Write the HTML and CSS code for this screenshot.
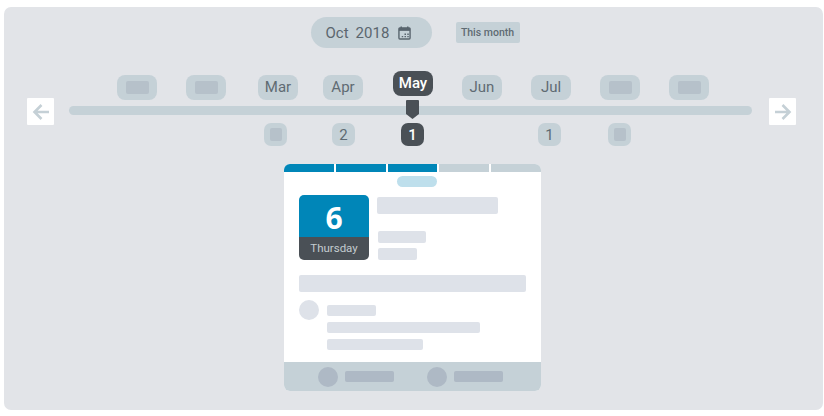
FILE: index.html
```html
<!DOCTYPE html>
<html lang="en">
<head>
    <meta name="viewport" content="width=device-width, initial-scale=1.0">
    <title>Timeline</title>
    <link rel="stylesheet" href="styles.css">
</head>
<body>
    <div class="panel">
        <!-- Month picker -->
        <div class="picker">
            <div class="date-pill">
                <span class="date-text">Oct</span>
                <span class="date-text">2018</span>
                <svg class="cal-icon" width="13" height="14" viewBox="0 0 14 15">
                    <path d="M3.500 0.500v2.500M10.500 0.500v2.500" stroke="#59656e" stroke-width="1.600" fill="none"/>
                    <rect x="1" y="2" width="12" height="12" rx="1" stroke="#59656e" stroke-width="1.500" fill="none"/>
                    <rect x="1" y="2" width="12" height="3.200" fill="#59656e"/>
                    <path d="M7 8h1.600v1.600H7zM10 8h1.600v1.600H10zM4 10.600h1.600v1.600H4zM7 10.600h1.600v1.600H7zM10 10.600h1.600v1.600H10z" fill="#59656e"/>
                </svg>
            </div>
            <div class="this-month">This month</div>
        </div>

        <!-- Timeline -->
        <div class="timeline">
            <div class="months">
                <div class="chip"><span class="chip-empty"></span></div>
                <div class="chip"><span class="chip-empty"></span></div>
                <div class="chip chip-mar">Mar</div>
                <div class="chip chip-apr">Apr</div>
                <div class="chip chip-active">May</div>
                <div class="chip">Jun</div>
                <div class="chip">Jul</div>
                <div class="chip"><span class="chip-empty"></span></div>
                <div class="chip"><span class="chip-empty"></span></div>
            </div>
            <div class="track-row">
                <button class="arrow">
                    <svg width="18" height="18" viewBox="0 0 18 18"><path d="M17 9H3M9.500 2L2.500 9l7 7" stroke="#c5d0d6" stroke-width="2.600" fill="none"/></svg>
                </button>
                <div class="track"></div>
                <button class="arrow">
                    <svg width="18" height="18" viewBox="0 0 18 18"><path d="M1 9h14M8.500 2l7 7-7 7" stroke="#c5d0d6" stroke-width="2.600" fill="none"/></svg>
                </button>
                <svg class="marker" width="13" height="19" viewBox="0 0 13 19"><path d="M1 0h11a1 1 0 0 1 1 1v13l-6.500 5L0 14V1a1 1 0 0 1 1-1z" fill="#4a5056"/></svg>
            </div>
            <div class="counts">
                <div class="count"><span class="count-empty"></span></div>
                <div class="count">2</div>
                <div class="count count-active">1</div>
                <div class="count count-jul">1</div>
                <div class="count count-last"><span class="count-empty"></span></div>
            </div>
        </div>

        <!-- Event card -->
        <div class="card">
            <div class="tabs">
                <span class="tab tab-on"></span>
                <span class="tab tab-on"></span>
                <span class="tab tab-on"></span>
                <span class="tab"></span>
                <span class="tab"></span>
            </div>
            <div class="card-pill"></div>
            <div class="card-body">
                <div class="card-head">
                    <div class="day">
                        <div class="day-num">6</div>
                        <div class="day-name">Thursday</div>
                    </div>
                    <div class="head-lines">
                        <div class="bar bar-title"></div>
                        <div class="bar bar-a"></div>
                        <div class="bar bar-b"></div>
                    </div>
                </div>
                <div class="bar bar-wide"></div>
                <div class="person">
                    <div class="dot"></div>
                    <div class="person-lines">
                        <div class="line line-a"></div>
                        <div class="line line-b"></div>
                        <div class="line line-c"></div>
                    </div>
                </div>
            </div>
            <div class="card-foot">
                <div class="foot-item"><span class="foot-dot"></span><span class="foot-bar"></span></div>
                <div class="foot-item"><span class="foot-dot"></span><span class="foot-bar"></span></div>
            </div>
        </div>
    </div>
</body>
</html>
```

FILE: styles.css
```css
body {
    background-color: white;
    font-family: Roboto, sans-serif;
    margin: 0;
    padding: 7px 1px 6px 4px;
}
.panel {
    height: 403px;
    background-color: #e2e4e8;
    border-radius: 7px;
    display: flex;
    flex-direction: column;
    align-items: center;
}
/* Month picker */
.picker {
    display: flex;
    align-items: center;
    margin-top: 10px;
    margin-left: 3px;
    width: 209px;
    gap: 24px;
}
.date-pill {
    width: 121px;
    height: 31px;
    flex: none;
    box-sizing: border-box;
    padding-left: 15px;
    border-radius: 16px;
    background-color: #c5d1d7;
    display: flex;
    align-items: center;
    gap: 7px;
}
.date-text {
    font-size: 15px;
    color: #5b666e;
}
.cal-icon {
    margin-left: 2px;
}
.this-month {
    width: 64px;
    height: 21px;
    flex: none;
    border-radius: 2px;
    background-color: #c5d1d7;
    color: #5f6b73;
    font-size: 10.500px;
    font-weight: 500;
    line-height: 21px;
    text-align: center;
}
/* Timeline */
.timeline {
    width: 769px;
    margin-top: 21px;
    margin-left: -4px;
}
.months {
    display: flex;
    justify-content: flex-start;
    gap: 29px;
    height: 27px;
    margin-bottom: -2px;
    padding-left: 90px;
    padding-top: 4px;
    align-items: flex-end;
}
.chip {
    width: 40px;
    height: 25px;
    flex: none;
    border-radius: 8px;
    background-color: #c5d1d7;
    color: #5f6b73;
    font-size: 15px;
    line-height: 25px;
    text-align: center;
    display: flex;
    align-items: center;
    justify-content: center;
}
.chip-empty {
    width: 23px;
    height: 13px;
    border-radius: 2px;
    background-color: #b6c1ca;
}
.chip-mar {
    margin-left: 3px;
}
.chip-apr {
    margin-left: -4px;
}
.chip-active {
    margin-left: 1px;
    margin-bottom: 4px;
    background-color: #4a5056;
    color: white;
    font-weight: 500;
}
.track-row {
    display: flex;
    align-items: center;
    gap: 15px;
    height: 27px;
    position: relative;
}
.arrow {
    width: 27px;
    height: 27px;
    padding: 0;
    border: none;
    border-radius: 1px;
    background-color: white;
    display: flex;
    align-items: center;
    justify-content: center;
    flex: none;
}
.track {
    flex: 1;
    height: 9px;
    margin-right: 2px;
    margin-bottom: 2px;
    border-radius: 5px;
    background-color: #c5d1d7;
}
.marker {
    position: absolute;
    left: 379px;
    top: 2px;
}
.counts {
    display: flex;
    gap: 45px;
    padding-left: 237px;
    margin-top: -2px;
}
.count {
    width: 23px;
    height: 23px;
    flex: none;
    border-radius: 7px;
    background-color: #c5d1d7;
    color: #5f6b73;
    font-size: 15px;
    display: flex;
    align-items: center;
    justify-content: center;
}
.count-empty {
    width: 12px;
    height: 13px;
    border-radius: 2px;
    background-color: #b6c1ca;
}
.count-active {
    margin-left: 1px;
    background-color: #4a5056;
    color: white;
    font-weight: 500;
}
.count-jul {
    margin-left: 69px;
}
.count-last {
    margin-left: 2px;
}
/* Event card */
.card {
    width: 257px;
    height: 227px;
    margin-top: 18px;
    margin-left: -2px;
    border-radius: 6px;
    background-color: white;
    overflow: hidden;
    display: flex;
    flex-direction: column;
    flex: none;
}
.tabs {
    display: flex;
    gap: 2px;
    height: 8px;
    flex: none;
}
.tab {
    flex: 1;
    background-color: #c5d1d7;
}
.tab-on {
    background-color: #0086b8;
}
.card-pill {
    width: 40px;
    height: 11px;
    flex: none;
    margin: 4px 0 0 113px;
    border-radius: 6px;
    background-color: #bedfec;
}
.card-body {
    flex: 1;
    padding: 8px 15px 0;
}
.card-head {
    display: flex;
    gap: 8px;
}
.day {
    width: 70px;
    height: 65px;
    border-radius: 5px;
    overflow: hidden;
    flex: none;
}
.day-num {
    height: 42px;
    background-color: #0086b8;
    color: white;
    font-family: "Open Sans", sans-serif;
    font-size: 30px;
    font-weight: 700;
    line-height: 46px;
    text-align: center;
}
.day-name {
    height: 23px;
    background-color: #4a5056;
    color: #c4ccd0;
    font-size: 11.500px;
    line-height: 22px;
    text-align: center;
}
.head-lines {
    padding-top: 2px;
}
.bar {
    border-radius: 2px;
    background-color: #dee2e9;
}
.bar-title {
    width: 121px;
    height: 17px;
}
.bar-a {
    width: 48px;
    height: 12px;
    margin: 17px 0 0 1px;
}
.bar-b {
    width: 39px;
    height: 12px;
    margin: 5px 0 0 1px;
}
.bar-wide {
    width: 227px;
    height: 17px;
    margin-top: 15px;
}
.person {
    display: flex;
    gap: 8px;
    margin-top: 8px;
}
.dot {
    width: 20px;
    height: 20px;
    flex: none;
    border-radius: 50%;
    background-color: #dee2e9;
}
.person-lines {
    padding-top: 5px;
}
.line {
    height: 11px;
    margin-bottom: 6px;
    border-radius: 2px;
    background-color: #dee2e9;
}
.line-a {
    width: 49px;
}
.line-b {
    width: 153px;
}
.line-c {
    width: 96px;
}
.card-foot {
    height: 29px;
    flex: none;
    display: flex;
    align-items: center;
    gap: 33px;
    padding-left: 34px;
    background-color: #c5d1d7;
}
.foot-item {
    display: flex;
    align-items: center;
    gap: 7px;
}
.foot-dot {
    width: 20px;
    height: 20px;
    border-radius: 50%;
    background-color: #aeb9c5;
}
.foot-bar {
    width: 49px;
    height: 11px;
    border-radius: 2px;
    background-color: #aeb9c5;
}
```
